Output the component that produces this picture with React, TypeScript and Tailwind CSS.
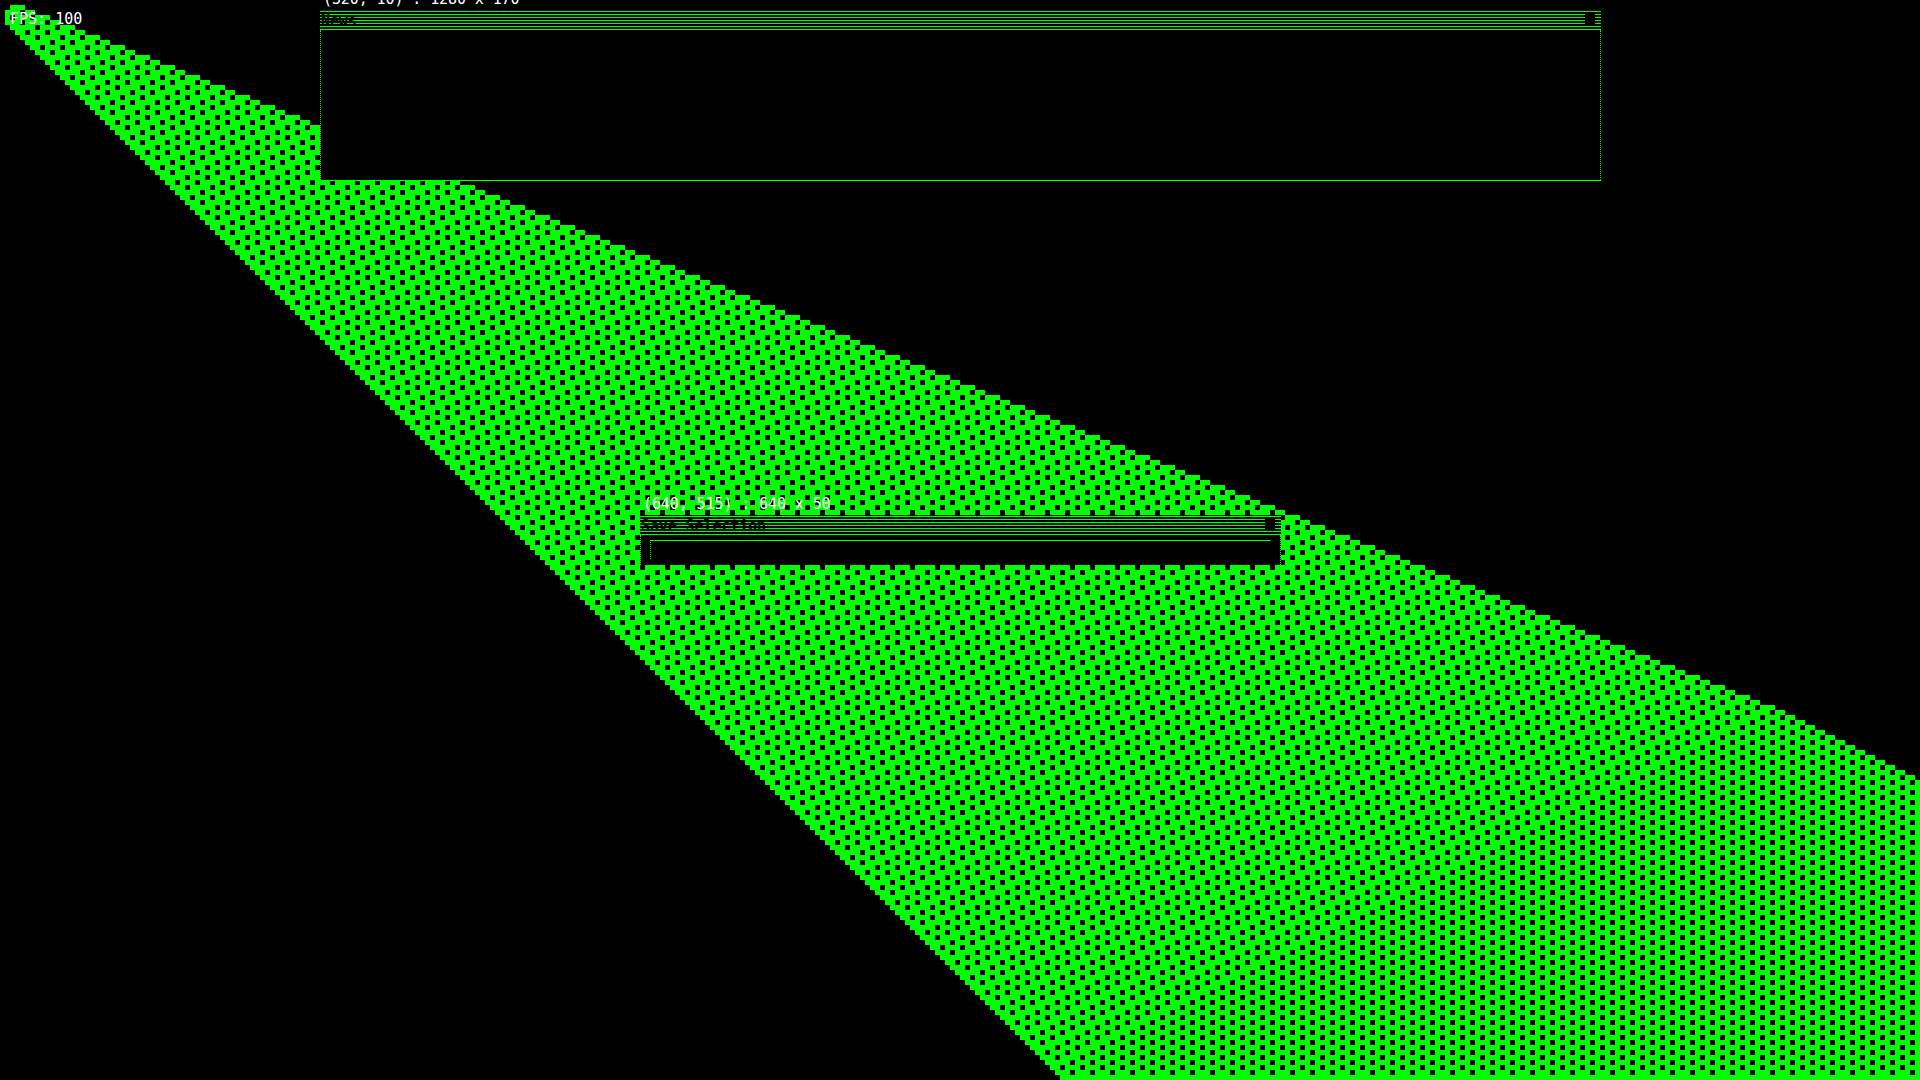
const CELL = 5

// the two stippled triangles meet along a line that runs down-left from (1775, 705)
function buildStipple() {
  let fill = ''
  let holes = ''

  for (let row = 1; row < 216; row++) {
    const start = row === 1 ? 2 : Math.max(row - 3, 1)
    const end = row < 141 ? Math.ceil(2.5 * row + 2) : 355 + 2 * (row - 141)
    const clipped = Math.min(end, 384)
    if (clipped <= start) continue

    fill += `M${start * CELL} ${row * CELL}h${(clipped - start) * CELL}v${CELL}h-${(clipped - start) * CELL}z`
    if (row === 215) continue

    const split = row < 141 ? Infinity : 220 + 2.015 * (208 - row)

    const offset = (2.5 * row + 3.75) % 4.5
    for (let k = 0; ; k++) {
      const col = Math.floor(offset + 4.5 * k)
      if (col >= clipped - 1 || col >= split) break
      if (col > start) holes += `M${col * CELL} ${row * CELL}h${CELL}v${CELL}h-${CELL}z`
    }

    if (split !== Infinity) {
      for (let col = Math.max(start + 1, Math.ceil(split)); col < clipped - 1; col++) {
        if (col % 2 === 0 && (col / 2 + row) % 2 === 1) {
          holes += `M${col * CELL} ${row * CELL}h${CELL}v${CELL}h-${CELL}z`
        }
      }
    }
  }

  return { fill, holes }
}

const stipple = buildStipple()
const TITLE_LINES = [0, 1, 2, 3, 4, 5, 6]

function Panel({
  label,
  title,
  className,
  children,
}: {
  label: string
  title: string
  className: string
  children?: React.ReactNode
}) {
  return (
    <div className={`absolute flex flex-col bg-black ${className}`}>
      <div className="absolute left-[3px] top-[-20px] whitespace-nowrap text-[15px] leading-[18px] tracking-[-0.1px] text-white">{label}</div>
      <div className="relative mt-px flex h-[19px] shrink-0 flex-col gap-[2px]">
        {TITLE_LINES.map((line) => (
          <div key={line} className="h-px shrink-0 bg-[#00ff00]" />
        ))}
        <span className="absolute left-[1px] top-[1px] text-[15px] font-bold leading-[18px] tracking-[-0.1px] text-black">{title}</span>
        <div className="absolute right-[6px] top-[3px] size-[10px] bg-black" />
      </div>
      <div className="flex-1 border-x border-dotted border-[#00ff00]">{children}</div>
    </div>
  )
}

export default function App() {
  return (
    <div className="relative h-[1080px] w-[1920px] overflow-hidden bg-black font-['DejaVu_Sans_Mono',monospace]">
      <svg className="absolute inset-0" width={1920} height={1080} shapeRendering="crispEdges">
        <path d={stipple.fill} fill="#00ff00" />
        <path d={stipple.holes} fill="#000000" />
      </svg>

      <div className="absolute left-[10px] top-[10px] text-[15px] leading-[18px] text-white">FPS: 100</div>

      <Panel
        label="(320, 10) : 1280 x 170"
        title="News"
        className="left-[320px] top-[10px] h-[171px] w-[1281px] border-b border-[#00ff00]"
      />

      <Panel
        label="(640, 515) : 640 x 50"
        title="Save Selection"
        className="left-[640px] top-[515px] h-[50px] w-[641px]"
      >
        <div className="mx-[9px] mt-[5px] h-[19px] border-l border-t border-[#00ff00] [border-left-style:dotted]" />
      </Panel>
    </div>
  )
}
